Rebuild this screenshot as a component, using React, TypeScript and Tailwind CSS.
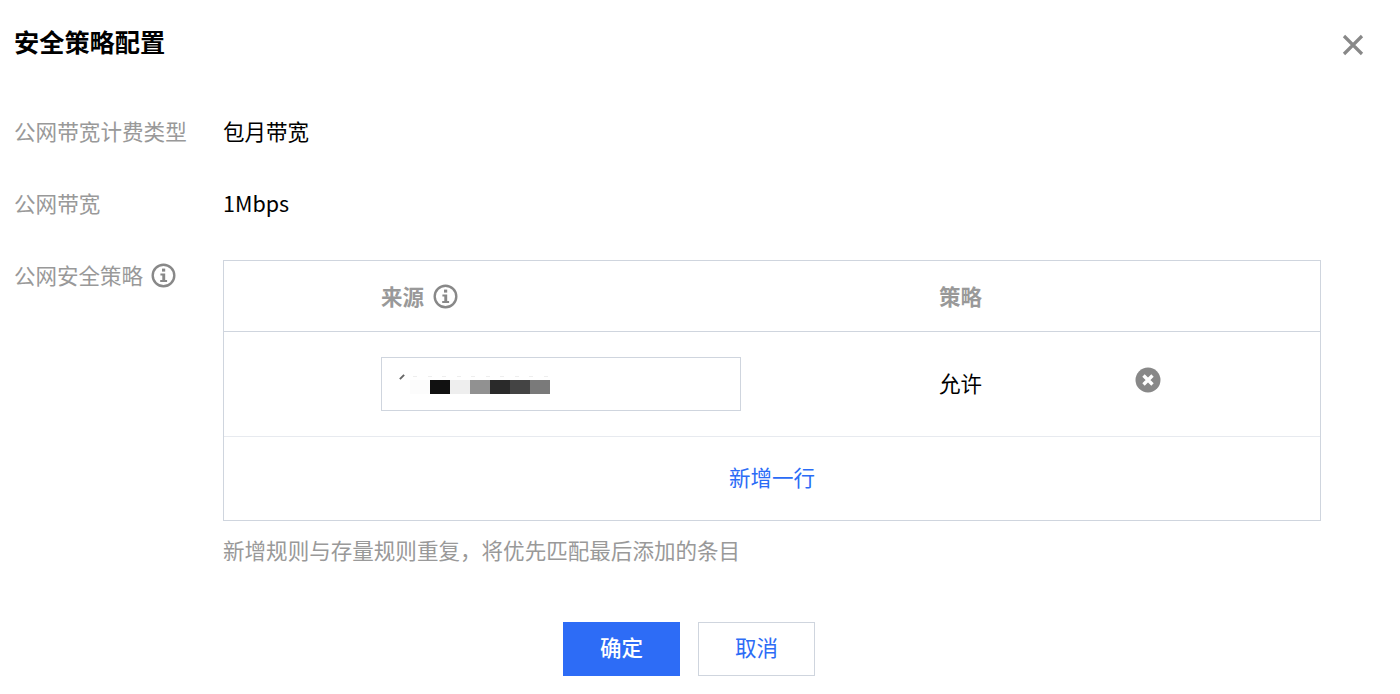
const font = "font-['Noto_Sans_CJK_SC','Liberation_Sans',sans-serif]";

const redacted = ["bg-[#fcfcfc]", "bg-[#111111]", "bg-[#eeeeee]", "bg-[#919191]", "bg-[#2a2a2a]", "bg-[#444444]", "bg-[#7a7a7a]"];
const dashes = [1, 2, 3, 4, 5, 6, 7, 8, 9, 10];

function InfoIcon() {
  return (
    <svg width="25" height="25" viewBox="0 0 25 25" fill="none">
      <circle cx="12.5" cy="12.5" r="10.8" stroke="#888888" strokeWidth="2.4" />
      <rect x="11" y="5.6" width="3.2" height="3" fill="#888888" />
      <path d="M9.4 10.4h4.8v6.6h1.9v2H9.2v-2h2.1v-4.6H9.4z" fill="#888888" />
    </svg>
  );
}

function Row({ label, value }: { label: string; value: string }) {
  return (
    <div className="flex h-[72px] items-start">
      <div className="w-[209px] text-[21.6px] leading-[32px] text-[#999999]">{label}</div>
      <div className="text-[21.5px] leading-[32px] text-black">{value}</div>
    </div>
  );
}

export default function App() {
  return (
    <div className={`${font} h-[694px] w-[1400px] overflow-hidden bg-white pl-[14px]`}>
      <div className="flex h-[115px] items-start justify-between pt-[23px] pr-[35px]">
        <h2 className="text-[25.2px] leading-[36px] font-semibold text-black">安全策略配置</h2>
        <svg className="mt-[10px]" width="24" height="24" viewBox="0 0 24 24" fill="none">
          <path d="M3 3l18 18M21 3L3 21" stroke="#888888" strokeWidth="3.2" />
        </svg>
      </div>

      <Row label="公网带宽计费类型" value="包月带宽" />
      <Row label="公网带宽" value="1Mbps" />

      <div className="flex items-start">
        <div className="flex w-[209px] items-center gap-[8px] text-[21.5px] leading-[32px] text-[#999999]">
          公网安全策略
          <InfoIcon />
        </div>
        <div className="mt-[1px]">
          <div className="w-[1098px] border border-[#cfd5de]">
            <div className="flex h-[71px] items-center border-b border-[#cfd5de] text-[21.5px] font-semibold text-[#999999]">
              <div className="ml-[157px] flex w-[558px] items-center gap-[9px]">
                来源
                <InfoIcon />
              </div>
              <div>策略</div>
            </div>
            <div className="flex h-[105px] items-start border-b border-[#e7eaef]">
              <div className="mt-[25px] ml-[157px] flex h-[54px] w-[360px] items-center border border-[#cfd5de] pt-[6px] pl-[28px]">
                <div className="relative flex h-[14px]">
                  <span className="absolute top-[-4px] left-[-11px] h-[2px] w-[6px] -rotate-45 bg-[#666666]" />
                  <span className="absolute top-[-4px] right-[2px] left-[3px] flex justify-between">
                    {dashes.map((d) => (
                      <span key={d} className="h-[1px] w-[4px] bg-[#eeeeee]" />
                    ))}
                  </span>
                  {redacted.map((c) => (
                    <span key={c} className={`h-[14px] w-[20px] ${c}`} />
                  ))}
                </div>
              </div>
              <div className="mt-[35px] ml-[198px] w-[196px] text-[21.5px] leading-[32px] text-black">允许</div>
              <svg className="mt-[35px]" width="26" height="26" viewBox="0 0 26 26" fill="none">
                <circle cx="13" cy="13" r="12.5" fill="#888888" />
                <path d="M8.5 8.5l9 9M17.5 8.5l-9 9" stroke="#ffffff" strokeWidth="3.4" />
              </svg>
            </div>
            <div className="flex h-[83px] items-center justify-center pb-[2px] text-[21.5px] text-[#2b6cf6]">新增一行</div>
          </div>
          <p className="mt-[13px] text-[21.55px] leading-[32px] text-[#999999]">新增规则与存量规则重复，将优先匹配最后添加的条目</p>
        </div>
      </div>

      <div className="mt-[56px] flex justify-center gap-[18px] pr-[36px] text-[21.5px]">
        <button className="h-[54px] w-[117px] bg-[#2d6cf6] pb-[4px] font-medium text-white">确定</button>
        <button className="h-[54px] w-[117px] border border-[#cfd5de] pb-[4px] text-[#2d6cf6]">取消</button>
      </div>
    </div>
  );
}
